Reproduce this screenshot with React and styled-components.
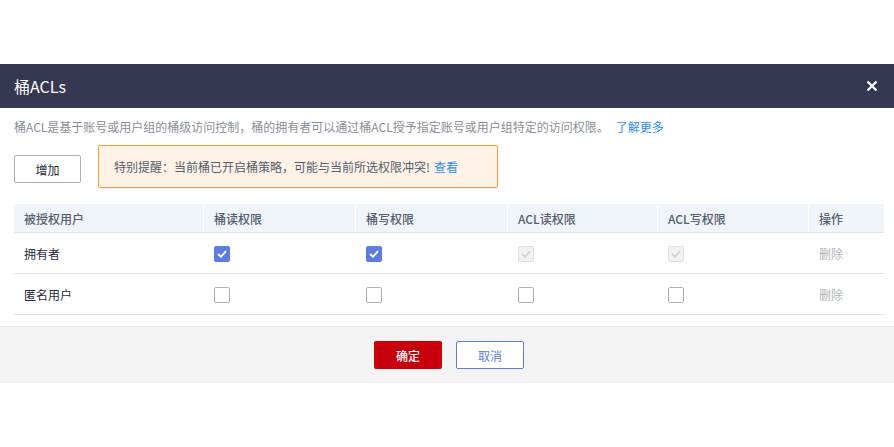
import React from "react";
import styled, { createGlobalStyle } from "styled-components";

const GlobalStyle = createGlobalStyle`
  html, body {
    margin: 0;
    padding: 0;
    background: #fff;
    font-family: "Liberation Sans", "Noto Sans CJK SC", sans-serif;
  }
`;

const columns = [
  { title: "被授权用户", width: 189 },
  { title: "桶读权限", width: 152 },
  { title: "桶写权限", width: 152 },
  { title: "ACL读权限", width: 150 },
  { title: "ACL写权限", width: 151 },
  { title: "操作", width: 76 },
];

const rows = [
  { name: "拥有者", perms: ["on", "on", "disabled", "disabled"] },
  { name: "匿名用户", perms: ["off", "off", "off", "off"] },
];

function CheckMark({ color }) {
  return (
    <svg width="10" height="8" viewBox="0 0 10 8">
      <path d="M1 4 L4 6.8 L9 1.2" fill="none" stroke={color} strokeWidth="1.8" />
    </svg>
  );
}

export default function App() {
  return (
    <Page>
      <GlobalStyle />
      <Dialog>
        <Header>
          <span>桶ACLs</span>
          <Close>
            <svg width="12" height="12" viewBox="0 0 12 12">
              <path d="M1.5 1.5 L10.5 10.5 M10.5 1.5 L1.5 10.5" stroke="#fff" strokeWidth="2.2" />
            </svg>
          </Close>
        </Header>
        <Body>
          <Desc>
            桶ACL是基于账号或用户组的桶级访问控制，桶的拥有者可以通过桶ACL授予指定账号或用户组特定的访问权限。
            <Link $gap={7}>了解更多</Link>
          </Desc>
          <Toolbar>
            <AddButton>增加</AddButton>
            <Notice>
              特别提醒：当前桶已开启桶策略，可能与当前所选权限冲突!<Link $gap={4}>查看</Link>
            </Notice>
          </Toolbar>
          <Table>
            <HeadRow>
              {columns.map((c) => (
                <HeadCell key={c.title} style={{ width: c.width }}>
                  {c.title}
                </HeadCell>
              ))}
            </HeadRow>
            {rows.map((r) => (
              <Row key={r.name}>
                <Cell style={{ width: columns[0].width }}>{r.name}</Cell>
                {r.perms.map((p, i) => (
                  <Cell key={i} style={{ width: columns[i + 1].width }}>
                    <Box $state={p}>
                      {p === "on" && <CheckMark color="#fff" />}
                      {p === "disabled" && <CheckMark color="#d4d4d8" />}
                    </Box>
                  </Cell>
                ))}
                <Cell style={{ width: columns[5].width }}>
                  <Action>删除</Action>
                </Cell>
              </Row>
            ))}
          </Table>
        </Body>
        <Footer>
          <PrimaryButton>确定</PrimaryButton>
          <GhostButton>取消</GhostButton>
        </Footer>
      </Dialog>
    </Page>
  );
}

const Page = styled.div`
  width: 894px;
  height: 447px;
  padding-top: 64px;
  box-sizing: border-box;
`;

const Dialog = styled.div`
  width: 894px;
  background: #fff;
`;

const Header = styled.div`
  height: 44px;
  background: #353853;
  display: flex;
  align-items: center;
  justify-content: space-between;
  padding: 0 14px 0 14px;
  color: #fff;
  font-size: 16px;
  font-family: "Noto Sans CJK SC", sans-serif;
  font-weight: 400;
`;

const Close = styled.div`
  width: 12px;
  height: 12px;
  display: flex;
  margin-right: 2px;
`;

const Body = styled.div`
  padding: 10px 10px 11px 14px;
`;

const Desc = styled.div`
  font-size: 12px;
  color: #8a8e99;
  line-height: 18px;
  font-family: "Noto Sans CJK SC", sans-serif;
`;

const Link = styled.span`
  color: #2c8ef8;
  margin-left: ${(p) => (p.$gap ?? 10)}px;
`;

const Toolbar = styled.div`
  display: flex;
  align-items: flex-start;
  gap: 17px;
  margin-top: 9px;
`;

const AddButton = styled.div`
  margin-top: 10px;
  width: 67px;
  height: 28px;
  box-sizing: border-box;
  border: 1px solid #adb0b8;
  border-radius: 2px;
  display: flex;
  align-items: center;
  justify-content: center;
  font-size: 12px;
  color: #252b3a;
  font-family: "Noto Sans CJK SC", sans-serif;
`;

const Notice = styled.div`
  width: 400px;
  height: 43px;
  box-sizing: border-box;
  border: 1px solid #ff9b3f;
  background: #fff2e6;
  border-radius: 2px;
  box-shadow: 0 1px 2px rgba(0, 0, 0, 0.08);
  display: flex;
  align-items: center;
  padding-left: 15px;
  font-size: 12px;
  color: #575d6c;
  font-family: "Noto Sans CJK SC", sans-serif;
`;

const Table = styled.div`
  margin-top: 16px;
  width: 870px;
  font-family: "Noto Sans CJK SC", sans-serif;
  font-size: 12px;
`;

const HeadRow = styled.div`
  display: flex;
  height: 28px;
  background: #f0f4fb;
  border-bottom: 1px solid #dfe1e6;
`;

const HeadCell = styled.div`
  box-sizing: border-box;
  display: flex;
  align-items: center;
  padding-left: 10px;
  color: #575d6c;
  font-weight: 500;
  border-left: 1px solid #fff;
  &:first-child {
    border-left: none;
  }
`;

const Row = styled.div`
  display: flex;
  height: 40px;
  border-bottom: 1px solid #dfe1e6;
`;

const Cell = styled.div`
  box-sizing: border-box;
  display: flex;
  align-items: center;
  padding-left: 10px;
  color: #252b3a;
  padding-top: 1px;
  &:not(:first-child) {
    padding-left: 11px;
  }
`;

const Box = styled.div`
  width: 16px;
  height: 16px;
  box-sizing: border-box;
  border-radius: 2px;
  display: flex;
  align-items: center;
  justify-content: center;
  background: ${(p) =>
    p.$state === "on" ? "#5e7ce0" : p.$state === "disabled" ? "#f2f2f3" : "#fff"};
  border: 1px solid
    ${(p) =>
      p.$state === "on" ? "#5e7ce0" : p.$state === "disabled" ? "#dfe1e6" : "#adb0b8"};
`;

const Action = styled.span`
  color: #b1b3b9;
`;

const Footer = styled.div`
  height: 57px;
  background: #f3f3f3;
  border-top: 1px solid #e8e8e8;
  display: flex;
  align-items: center;
  justify-content: center;
  gap: 14px;
  padding-left: 4px;
  box-sizing: border-box;
  font-family: "Noto Sans CJK SC", sans-serif;
  font-size: 12px;
`;

const PrimaryButton = styled.div`
  width: 68px;
  height: 28px;
  box-sizing: border-box;
  background: #c7000b;
  color: #fff;
  border-radius: 2px;
  display: flex;
  align-items: center;
  justify-content: center;
  font-weight: 500;
`;

const GhostButton = styled.div`
  width: 68px;
  height: 28px;
  box-sizing: border-box;
  background: #fff;
  color: #5e7ce0;
  border: 1px solid #5e7ce0;
  border-radius: 2px;
  display: flex;
  align-items: center;
  justify-content: center;
`;
